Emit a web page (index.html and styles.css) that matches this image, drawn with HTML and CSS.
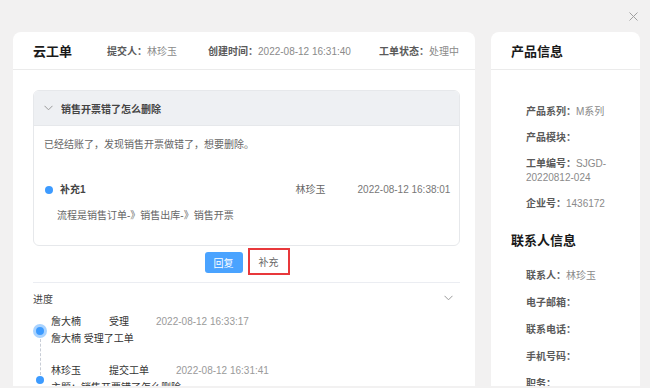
FILE: index.html
```html
<!DOCTYPE html>
<html lang="zh">
<head>
<meta charset="utf-8">
<title>云工单</title>
<link rel="stylesheet" href="styles.css">
</head>
<body>
<div class="topbar">
  <svg class="close" width="9" height="9" viewBox="0 0 9 9"><path d="M0.5 0.5L8.5 8.5M8.5 0.5L0.5 8.5" stroke="#a0a0a0" stroke-width="1" fill="none"/></svg>
</div>
<div class="main">
  <section class="panel left">
    <header class="panel-head">
      <h1 class="title">云工单</h1>
      <div class="meta m1"><span class="lab">提交人：</span><span class="val">林珍玉</span></div>
      <div class="meta m2"><span class="lab">创建时间：</span><span class="val">2022-08-12 16:31:40</span></div>
      <div class="meta m3"><span class="lab">工单状态：</span><span class="val">处理中</span></div>
    </header>
    <div class="left-body">
      <div class="card">
        <div class="card-head">
          <svg class="chev" width="9" height="6" viewBox="0 0 9 6"><path d="M0.5 0.8L4.5 4.8L8.5 0.8" stroke="#9a9a9a" stroke-width="1" fill="none"/></svg>
          <span class="card-title">销售开票错了怎么删除</span>
        </div>
        <div class="card-body">
          <p class="desc">已经结账了，发现销售开票做错了，想要删除。</p>
          <div class="sup-row">
            <span class="dot"></span>
            <span class="sup-name">补充1</span>
            <span class="sup-user">林珍玉</span>
            <span class="sup-time">2022-08-12 16:38:01</span>
          </div>
          <p class="sup-text">流程是销售订单-》销售出库-》销售开票</p>
        </div>
      </div>
      <div class="actions">
        <button class="btn primary">回复</button>
        <span class="highlight"><button class="btn plain">补充</button></span>
      </div>
      <div class="progress-head">
        <span>进度</span>
        <svg class="chev2" width="9" height="6" viewBox="0 0 9 6"><path d="M0.5 0.8L4.5 4.8L8.5 0.8" stroke="#9a9a9a" stroke-width="1" fill="none"/></svg>
      </div>
      <ul class="timeline">
        <li class="tl-item first">
          <div class="axis"><span class="tl-dot big"></span></div>
          <div class="tl-content">
            <div class="tl-line"><span class="tl-user">詹大楠</span><span class="tl-act">受理</span><span class="tl-time">2022-08-12 16:33:17</span></div>
            <div class="tl-desc">詹大楠 受理了工单</div>
          </div>
        </li>
        <li class="tl-item">
          <div class="axis"><span class="tl-dot"></span></div>
          <div class="tl-content">
            <div class="tl-line"><span class="tl-user">林珍玉</span><span class="tl-act">提交工单</span><span class="tl-time">2022-08-12 16:31:41</span></div>
            <div class="tl-desc">主题：销售开票错了怎么删除</div>
          </div>
        </li>
      </ul>
    </div>
  </section>
  <aside class="panel right">
    <header class="panel-head"><h2 class="title">产品信息</h2></header>
    <div class="right-body">
      <ul class="info">
        <li><span class="lab">产品系列：</span><span class="val">M系列</span></li>
        <li><span class="lab">产品模块：</span></li>
        <li><span class="lab">工单编号：</span><span class="val">SJGD-20220812-024</span></li>
        <li><span class="lab">企业号：</span><span class="val">1436172</span></li>
      </ul>
      <h2 class="title sub">联系人信息</h2>
      <ul class="info contact">
        <li><span class="lab">联系人：</span><span class="val">林珍玉</span></li>
        <li><span class="lab">电子邮箱：</span></li>
        <li><span class="lab">联系电话：</span></li>
        <li><span class="lab">手机号码：</span></li>
        <li><span class="lab">职务：</span></li>
      </ul>
    </div>
  </aside>
</div>
</body>
</html>
```
FILE: styles.css
```css
* { box-sizing: border-box; }
html, body { margin: 0; padding: 0; }
body {
  width: 650px;
  height: 388px;
  overflow: hidden;
  background: #f2f1f1;
  font-family: "Liberation Sans", "Noto Sans CJK SC", sans-serif;
  color: #333;
  font-size: 10px;
}
ul { list-style: none; margin: 0; padding: 0; }
p { margin: 0; }
h1, h2 { margin: 0; }

.topbar {
  height: 32px;
  display: flex;
  justify-content: flex-end;
  align-items: flex-start;
  padding: 12px 12px 0 0;
}
.main {
  display: flex;
  gap: 16px;
  padding-left: 13px;
  height: 354px;
}
.panel {
  background: #fff;
  border-radius: 8px 8px 0 0;
  height: 354px;
  overflow: hidden;
}
.panel.left { width: 462px; }
.panel.right { width: 149px; }

.panel-head {
  height: 38px;
  border-bottom: 1px solid #ebebeb;
  display: flex;
  align-items: center;
  padding: 0 20px;
}
.title {
  font-size: 13px;
  font-weight: bold;
  color: #1a1a1a;
}
.meta { font-size: 10px; white-space: nowrap; }
.lab { color: #5a5a5a; font-weight: bold; }
.val { color: #8a8a8a; }
.m1 { margin-left: 35px; }
.m2 { margin-left: 31px; }
.m3 { margin-left: auto; margin-right: -4px; }

.left-body { padding: 20px 15px 0 20px; }
.card {
  border: 1px solid #e6e8eb;
  border-radius: 6px;
  height: 156px;
  overflow: hidden;
}
.card-head {
  height: 35px;
  background: #eef0f3;
  border-bottom: 1px solid #e6e8eb;
  display: flex;
  align-items: center;
  padding-left: 10px;
  gap: 8px;
}
.card-title { font-size: 10px; font-weight: bold; color: #444; }
.card-body { padding: 12px 0 0 10px; font-size: 10px; color: #666; }
.desc { line-height: 14px; }
.sup-row {
  display: flex;
  align-items: center;
  margin-top: 31px;
  line-height: 14px;
  padding-left: 1px;
  white-space: nowrap;
}
.sup-row > * { flex-shrink: 0; }
.dot {
  width: 8px; height: 8px; border-radius: 50%;
  background: #3d9bff;
}
.sup-name { margin-left: 7px; font-weight: bold; color: #444; }
.sup-user { margin-left: 210px; color: #666; }
.sup-time { margin-left: 32px; color: #777; }
.sup-text { margin-top: 12px; padding-left: 13px; line-height: 14px; }

.actions {
  display: flex;
  justify-content: center;
  align-items: center;
  gap: 5px;
  height: 37px;
  border-bottom: 1px solid #ebedf2;
  padding-bottom: 4px;
  padding-left: 1px;
}
.btn {
  border: 0;
  font-family: inherit;
  font-size: 10px;
  padding: 0;
  cursor: pointer;
}
.btn.primary {
  background: #4aa3ff;
  color: #fff;
  width: 38px;
  height: 21px;
  border-radius: 3px;
}
.highlight {
  display: flex;
  border: 2px solid #e8383b;
  width: 42px;
  height: 27px;
  align-items: center;
  justify-content: center;
  margin-top: -2px;
}
.btn.plain { background: #fff; color: #666; }

.progress-head {
  display: flex;
  justify-content: space-between;
  align-items: center;
  height: 30px;
  padding-right: 7px;
  color: #444;
}

.timeline { margin-top: 0; }
.tl-item {
  display: flex;
  align-items: center;
  height: 36px;
}
.tl-item + .tl-item { margin-top: 13px; }
.axis {
  width: 14px;
  align-self: stretch;
  position: relative;
  margin-right: 4px;
}
.tl-dot {
  position: absolute;
  left: 3px; top: 50%;
  width: 8px; height: 8px;
  margin-top: -4px;
  border-radius: 50%;
  background: #3d9bff;
}
.tl-dot.big {
  left: 0;
  width: 14px; height: 14px;
  margin-top: -7px;
  background: #3d9bff;
  border: 3px solid #a9d3ff;
}
.first .axis::after {
  content: "";
  position: absolute;
  left: 6.5px;
  top: 26px;
  height: 36px;
  border-left: 1px dashed #c8cdd6;
}
.tl-content { font-size: 10px; color: #333; }
.tl-line { display: flex; line-height: 16px; }
.tl-user { width: 58px; }
.tl-act { width: 47px; }
.tl-time { color: #9a9a9a; }
.tl-item:not(.first) .tl-act { width: 67px; }
.tl-desc { line-height: 18px; }

.right-body { padding: 35px 10px 0 20px; }
.info { padding-left: 15px; font-size: 10px; }
.info li { line-height: 14px; margin-bottom: 12px; }
.info li:last-child { margin-bottom: 0; }
.info .val { word-break: break-all; }
.info li:nth-child(3) { width: 82px; }
.title.sub { margin-top: 21px; line-height: 18px; }
.contact { margin-top: 19px; }
.contact li { margin-bottom: 13px; }
```
